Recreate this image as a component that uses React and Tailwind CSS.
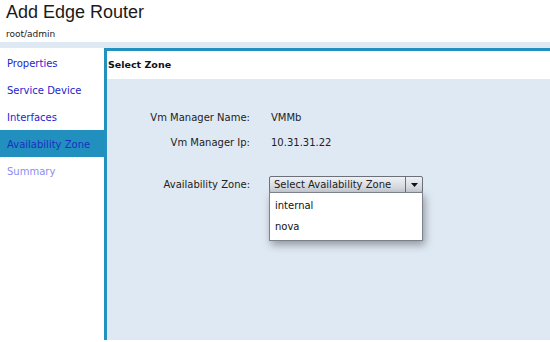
const NAV = [
  { label: "Properties", state: "link" },
  { label: "Service Device", state: "link" },
  { label: "Interfaces", state: "link" },
  { label: "Availability Zone", state: "active" },
  { label: "Summary", state: "disabled" },
];

const FONT = { fontFamily: '"DejaVu Sans", Verdana, sans-serif' };
const TITLE_FONT = { fontFamily: '"Liberation Sans", Arial, sans-serif' };

export default function App() {
  return (
    <div className="w-[550px] h-[342px] bg-white overflow-hidden flex flex-col" style={FONT}>
      {/* Header */}
      <div className="h-[42px] pl-[6px] pt-[1px]">
        <div className="text-[18px] leading-[22px] text-[#1a1a1a]" style={TITLE_FONT}>
          Add Edge Router
        </div>
        <div className="text-[9px] leading-[12px] mt-[5px] text-[#222]">root/admin</div>
      </div>
      <div className="h-[6px] bg-[#dfe9f4]" />

      <div className="flex flex-1 min-h-0">
        {/* Side nav */}
        <div className="w-[104px] pt-[1px] flex flex-col">
          {NAV.map((n) => (
            <div
              key={n.label}
              className={
                "h-[27px] flex items-center pl-[7px] pt-[2px] text-[10px] whitespace-nowrap " +
                (n.state === "active"
                  ? "bg-[#2190be] text-[#1c2fc2]"
                  : n.state === "disabled"
                  ? "text-[#8c8cf5]"
                  : "text-[#2424d0]")
              }
            >
              {n.label}
            </div>
          ))}
        </div>

        {/* Panel */}
        <div className="flex-1 flex flex-col border-l-[3px] border-t-[3px] border-[#2391c0] mb-[2px]">
          <div className="h-[28px] flex items-center pl-[1px] text-[9.5px] font-bold text-[#111] bg-white">
            Select Zone
          </div>
          <div className="flex-1 bg-[#dfe9f4]">
            <div className="grid grid-cols-[143px_1fr] gap-x-[21px] pt-[30px] text-[10px] text-[#222]">
              <div className="h-[17px] mb-[8px] flex items-center justify-end">Vm Manager Name:</div>
              <div className="h-[17px] mb-[8px] flex items-center">VMMb</div>
              <div className="h-[17px] mb-[25px] flex items-center justify-end">Vm Manager Ip:</div>
              <div className="h-[17px] mb-[25px] flex items-center">10.31.31.22</div>
              <div className="h-[17px] flex items-center justify-end">Availability Zone:</div>
              <div className="relative -ml-[2px]">
                <div className="w-[154px] h-[17px] flex border border-[#6b7079] rounded-[2px] bg-gradient-to-b from-[#eef1f5] to-[#c9ced6]">
                  <div className="flex-1 flex items-center pl-[4px] text-[10px] text-[#222] border-r border-[#6b7079]">
                    Select Availability Zone
                  </div>
                  <div className="w-[16px] flex items-center justify-center">
                    <svg width="7" height="4" viewBox="0 0 7 4">
                      <path d="M0 0h7L3.5 4z" fill="#111" />
                    </svg>
                  </div>
                </div>
                <div className="absolute left-0 top-[16px] w-[154px] bg-white border border-[#7d828a] shadow-[2px_4px_8px_rgba(0,0,0,0.35)] flex flex-col pt-[2px] pb-[3px]">
                  <div className="h-[21px] flex items-center pl-[5px] text-[10px] text-[#111]">internal</div>
                  <div className="h-[21px] flex items-center pl-[5px] text-[10px] text-[#111]">nova</div>
                </div>
              </div>
            </div>
          </div>
        </div>
      </div>
    </div>
  );
}
